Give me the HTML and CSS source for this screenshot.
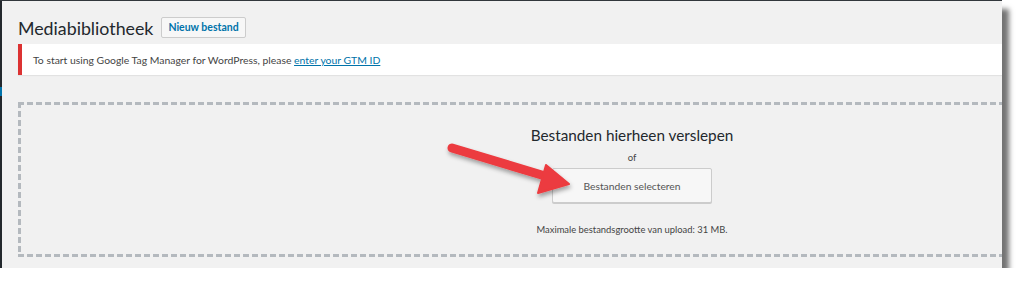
FILE: index.html
```html
<!doctype html>
<html>
	<head>
		<title>Mediabibliotheek</title>
		<meta charset="utf8">
		<link rel="stylesheet" href="styles.css">
	</head>
	<body>
		<div class="screen">
			<div class="adminmenu"><span class="current"></span></div>
			<div class="wrap">
				<header class="heading">
					<h1>Mediabibliotheek</h1>
					<a class="add-new" href="#">Nieuw bestand</a>
				</header>
				<div class="notice">
					<p>To start using Google Tag Manager for WordPress, please <a href="#">enter your GTM ID</a></p>
				</div>
				<div class="dropzone">
					<div class="drop-inside">
						<p class="drop-title">Bestanden hierheen verslepen</p>
						<p class="drop-or">of</p>
						<button class="select-files" type="button">Bestanden selecteren</button>
						<p class="max-size">Maximale bestandsgrootte van upload: 31 MB.</p>
					</div>
				</div>
			</div>
			<!-- callout arrow drawn over the screenshot -->
			<svg class="arrow" width="140" height="70" viewBox="440 135 140 70">
				<defs>
					<filter id="shade" x="-20%" y="-20%" width="140%" height="160%">
						<feDropShadow dx="1" dy="3" stdDeviation="2" flood-color="#000" flood-opacity="0.35"/>
					</filter>
				</defs>
				<g fill="#ec3b3f" stroke="#ec3b3f" filter="url(#shade)">
					<line x1="452" y1="147" x2="545" y2="175" stroke-width="9" stroke-linecap="round"/>
					<polygon points="546,164 569,183 538,192" stroke-width="2" stroke-linejoin="round"/>
				</g>
			</svg>
		</div>
	</body>
</html>
```

FILE: styles.css
```css
html, body {
	margin: 0;
	padding: 0;
	background: #fff;
}
body {
	font-family: Lato, "Noto Sans", sans-serif;
	color: #444;
}
.screen {
	position: relative;
	display: flex;
	width: 1002px;
	height: 268px;
	background: #f1f1f1;
	border-top: 1px solid #32373c;
	box-sizing: border-box;
	box-shadow: 7px 9px 5px rgba(0, 0, 0, .55);
	overflow: hidden;
}
.adminmenu {
	flex: none;
	width: 2px;
	background: #23282d;
	padding-top: 86px;
}
.adminmenu .current {
	display: block;
	height: 9px;
	background: #0073aa;
}
.wrap {
	flex: 1;
	min-width: 0;
	padding: 16px 0 0 16px;
}
.heading {
	display: flex;
	align-items: center;
	gap: 8px;
	height: 21px;
}
h1 {
	margin: 0;
	font-size: 17.8px;
	font-weight: 400;
	color: #23282d;
}
.add-new {
	display: block;
	padding: 0 6px;
	height: 19px;
	line-height: 19px;
	border: 1px solid #ccc;
	border-radius: 2px;
	background: #f7f7f7;
	font-size: 10.5px;
	font-weight: 700;
	color: #0073aa;
	text-decoration: none;
}
.notice {
	margin-top: 6px;
	height: 31px;
	background: #fff;
	border-left: 4px solid #dc3232;
	box-shadow: 0 1px 1px rgba(0, 0, 0, .06);
	display: flex;
	align-items: center;
	padding-left: 11px;
}
.notice p {
	margin: 0;
	font-size: 10.4px;
	color: #444;
}
.notice a {
	color: #0073aa;
}
.dropzone {
	margin-top: 27px;
	width: 1228px;
	height: 155px;
	box-sizing: border-box;
	background:
		repeating-linear-gradient(90deg, #b4b9be 0 6px, transparent 6px 9px) top left / 100% 3px no-repeat,
		repeating-linear-gradient(90deg, #b4b9be 0 6px, transparent 6px 9px) bottom left / 100% 3px no-repeat,
		repeating-linear-gradient(180deg, #b4b9be 0 6px, transparent 6px 9px) top left / 3px 100% no-repeat,
		repeating-linear-gradient(180deg, #b4b9be 0 6px, transparent 6px 9px) top right / 3px 100% no-repeat;
}
.drop-inside {
	display: flex;
	flex-direction: column;
	align-items: center;
	padding-top: 22px;
}
.drop-inside p {
	margin: 0;
}
.drop-title {
	font-size: 15.3px;
	color: #23282d;
	line-height: 22px;
}
.drop-or {
	margin-top: 6px !important;
	font-size: 9.5px;
	color: #444;
}
.select-files {
	margin-top: 5px;
	width: 160px;
	height: 35px;
	border: 1px solid #ccc;
	border-radius: 2px;
	background: #f7f7f7;
	box-shadow: 0 1px 0 #ccc;
	font-family: inherit;
	font-size: 10.3px;
	color: #555;
}
.max-size {
	margin-top: 21px !important;
	font-size: 9.4px;
	color: #444;
}
.arrow {
	position: absolute;
	left: 440px;
	top: 135px;
}
```
